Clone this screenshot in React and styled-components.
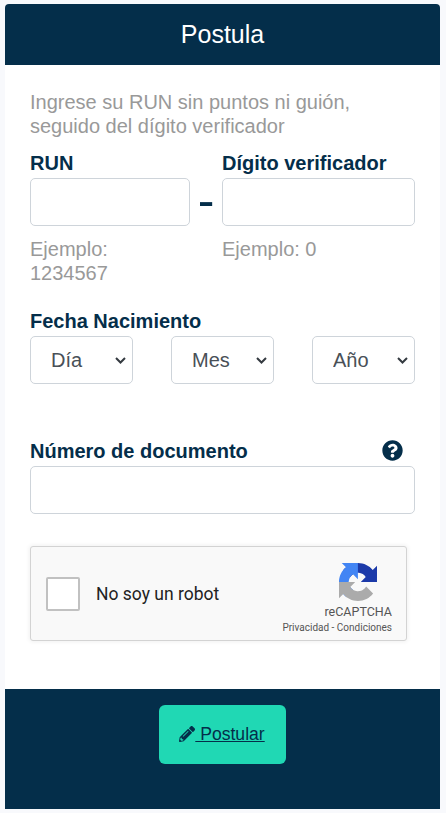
import styled, { createGlobalStyle } from "styled-components";
import { FaPencilAlt, FaQuestionCircle } from "react-icons/fa";

const navy = "#042e4a";

const chevron =
  "url(\"data:image/svg+xml,%3Csvg xmlns='http://www.w3.org/2000/svg' viewBox='0 0 11 7'%3E%3Cpath d='M1 1l4.5 4.5L10 1' fill='none' stroke='%23343a40' stroke-width='2'/%3E%3C/svg%3E\")";

const GlobalStyle = createGlobalStyle`
  html, body {
    margin: 0;
    background-color: #f8f9fc;
    font-family: "Liberation Sans", Arial, sans-serif;
  }
  * {
    box-sizing: border-box;
  }
`;

const Page = styled.div`
  width: 446px;
  height: 813px;
  padding: 4px 6px 4px 5px;
  overflow: hidden;
`;

const Card = styled.div`
  display: flex;
  flex-direction: column;
  height: 805px;
  background-color: #fff;
  border-radius: 4px 4px 0 0;
  overflow: hidden;
`;

const CardHeader = styled.h1`
  margin: 0;
  height: 61px;
  line-height: 60px;
  background-color: ${navy};
  color: #fff;
  font-size: 25px;
  font-weight: 400;
  text-align: center;
`;

const CardBody = styled.div`
  flex: 1;
  padding: 25px 25px 0;
`;

const Hint = styled.p`
  margin: 0;
  color: #999;
  font-size: 20px;
  line-height: 24px;
`;

const RunRow = styled.div`
  display: grid;
  grid-template-columns: 160px 32px 193px;
  margin-top: 13px;
`;

const Field = styled.div`
  display: flex;
  flex-direction: column;
`;

const Label = styled.label`
  display: block;
  color: ${navy};
  font-size: 20px;
  font-weight: 700;
  line-height: 24px;
  margin-bottom: 3px;
`;

const TextInput = styled.input`
  display: block;
  width: 100%;
  height: 48px;
  padding: 6px 12px;
  background-color: #fff;
  border: 1px solid #ced4da;
  border-radius: 5px;
  font: inherit;
`;

const Dash = styled.span`
  height: 48px;
  line-height: 44px;
  color: ${navy};
  font-size: 50px;
  font-weight: 400;
  text-align: center;
`;

const Example = styled.small`
  display: block;
  margin-top: 11px;
  color: #999;
  font-size: 20px;
  line-height: 24px;
`;

const DateSection = styled.div`
  margin-top: 24px;
`;

const SelectRow = styled.div`
  display: flex;
  justify-content: space-between;
`;

const Select = styled.select`
  appearance: none;
  width: 103px;
  height: 48px;
  padding: 0 0 0 20px;
  background: #fff ${chevron} no-repeat right 6px center / 11px 7px;
  border: 1px solid #ced4da;
  border-radius: 5px;
  color: #495057;
  font-family: inherit;
  font-size: 20px;
`;

const DocSection = styled.div`
  margin-top: 55px;
`;

const DocLabelRow = styled.div`
  display: flex;
  justify-content: space-between;
  align-items: center;
  height: 27px;
  padding-right: 12px;
`;

const HelpIcon = styled(FaQuestionCircle)`
  width: 21px;
  height: 21px;
  margin-bottom: 4px;
  color: ${navy};
`;

const Captcha = styled.div`
  display: flex;
  align-items: center;
  width: 377px;
  height: 95px;
  margin-top: 32px;
  padding: 0 14px 0 15px;
  background-color: #f9f9f9;
  border: 1px solid #d3d3d3;
  border-radius: 3px;
  box-shadow: 0 0 4px 1px rgba(0, 0, 0, 0.06);
  font-family: Roboto, sans-serif;
`;

const CaptchaBox = styled.span`
  width: 34px;
  height: 34px;
  background-color: #fff;
  border: 2px solid #c1c1c1;
  border-radius: 2px;
`;

const CaptchaLabel = styled.span`
  flex: 1;
  margin-left: 16px;
  color: #222;
  font-size: 17.5px;
`;

const CaptchaBrand = styled.div`
  display: flex;
  flex-direction: column;
  align-items: flex-end;
  padding-top: 11px;
`;

const LogoWrap = styled.span`
  display: flex;
  padding-right: 15px;
`;

const CaptchaName = styled.span`
  margin-top: 3px;
  color: #555;
  font-size: 12.5px;
  line-height: 16px;
`;

const CaptchaLinks = styled.span`
  margin-top: 1px;
  color: #555;
  font-size: 10px;
  line-height: 14px;
  white-space: nowrap;
`;

const CardFooter = styled.div`
  display: flex;
  justify-content: center;
  align-items: flex-start;
  height: 120px;
  padding: 16px 0 0 0;
  background-color: ${navy};
`;

const PostButton = styled.a`
  display: block;
  width: 127px;
  height: 59px;
  margin-right: 1px;
  line-height: 59px;
  background-color: #20d8b4;
  border-radius: 6px;
  color: ${navy};
  font-size: 17.6px;
  text-align: center;
  text-decoration: underline;
  cursor: pointer;
  svg {
    vertical-align: -2px;
  }
`;

const RecaptchaLogo = () => (
  <svg width="38" height="38" viewBox="0 0 64 64" aria-hidden="true">
    <path
      d="M64 31.955l-.033-1.37V4.687l-7.16 7.16C50.948 4.674 42.033.093 32.05.093c-10.4 0-19.622 4.96-25.458 12.64l11.736 11.86a15.55 15.55 0 0 1 4.754-5.334c2.05-1.6 4.952-2.906 8.968-2.906.485 0 .86.057 1.135.163 4.976.393 9.288 3.14 11.828 7.124l-8.307 8.307 26.295.008"
      fill="#1c3aa9"
    />
    <path
      d="M31.862.094l-1.37.033H4.594l7.16 7.16C4.58 13.147 0 22.06 0 32.046c0 10.4 4.96 19.622 12.64 25.458L24.5 45.768a15.55 15.55 0 0 1-5.334-4.754c-1.6-2.05-2.906-4.952-2.906-8.968 0-.485.057-.86.163-1.135.393-4.976 3.14-9.288 7.124-11.828l8.307 8.307.008-26.295"
      fill="#4285f4"
    />
    <path
      d="M.001 32.045l.033 1.37V59.31l7.16-7.16c5.86 7.173 14.774 11.754 24.76 11.754 10.4 0 19.622-4.96 25.458-12.64L45.677 39.403a15.55 15.55 0 0 1-4.754 5.334c-2.05 1.6-4.952 2.906-8.968 2.906-.485 0-.86-.057-1.135-.163-4.976-.393-9.288-3.14-11.828-7.124l8.307-8.307-26.295-.008"
      fill="#ababab"
    />
  </svg>
);

const App = () => {
  return (
    <Page>
      <GlobalStyle />
      <Card>
        <CardHeader>Postula</CardHeader>
        <CardBody>
          <Hint>
            Ingrese su RUN sin puntos ni guión,
            <br />
            seguido del dígito verificador
          </Hint>
          <RunRow>
            <Field>
              <Label>RUN</Label>
              <TextInput type="text" />
              <Example>Ejemplo: 1234567</Example>
            </Field>
            <Field>
              <Label>&nbsp;</Label>
              <Dash>-</Dash>
            </Field>
            <Field>
              <Label>Dígito verificador</Label>
              <TextInput type="text" />
              <Example>Ejemplo: 0</Example>
            </Field>
          </RunRow>
          <DateSection>
            <Label>Fecha Nacimiento</Label>
            <SelectRow>
              <Select defaultValue="dia">
                <option value="dia">Día</option>
              </Select>
              <Select defaultValue="mes">
                <option value="mes">Mes</option>
              </Select>
              <Select defaultValue="anio">
                <option value="anio">Año</option>
              </Select>
            </SelectRow>
          </DateSection>
          <DocSection>
            <DocLabelRow>
              <Label>Número de documento</Label>
              <HelpIcon />
            </DocLabelRow>
            <TextInput type="text" />
          </DocSection>
          <Captcha>
            <CaptchaBox />
            <CaptchaLabel>No soy un robot</CaptchaLabel>
            <CaptchaBrand>
              <LogoWrap>
                <RecaptchaLogo />
              </LogoWrap>
              <CaptchaName>reCAPTCHA</CaptchaName>
              <CaptchaLinks>Privacidad - Condiciones</CaptchaLinks>
            </CaptchaBrand>
          </Captcha>
        </CardBody>
        <CardFooter>
          <PostButton>
            <FaPencilAlt size={16} /> Postular
          </PostButton>
        </CardFooter>
      </Card>
    </Page>
  );
};

export default App;
